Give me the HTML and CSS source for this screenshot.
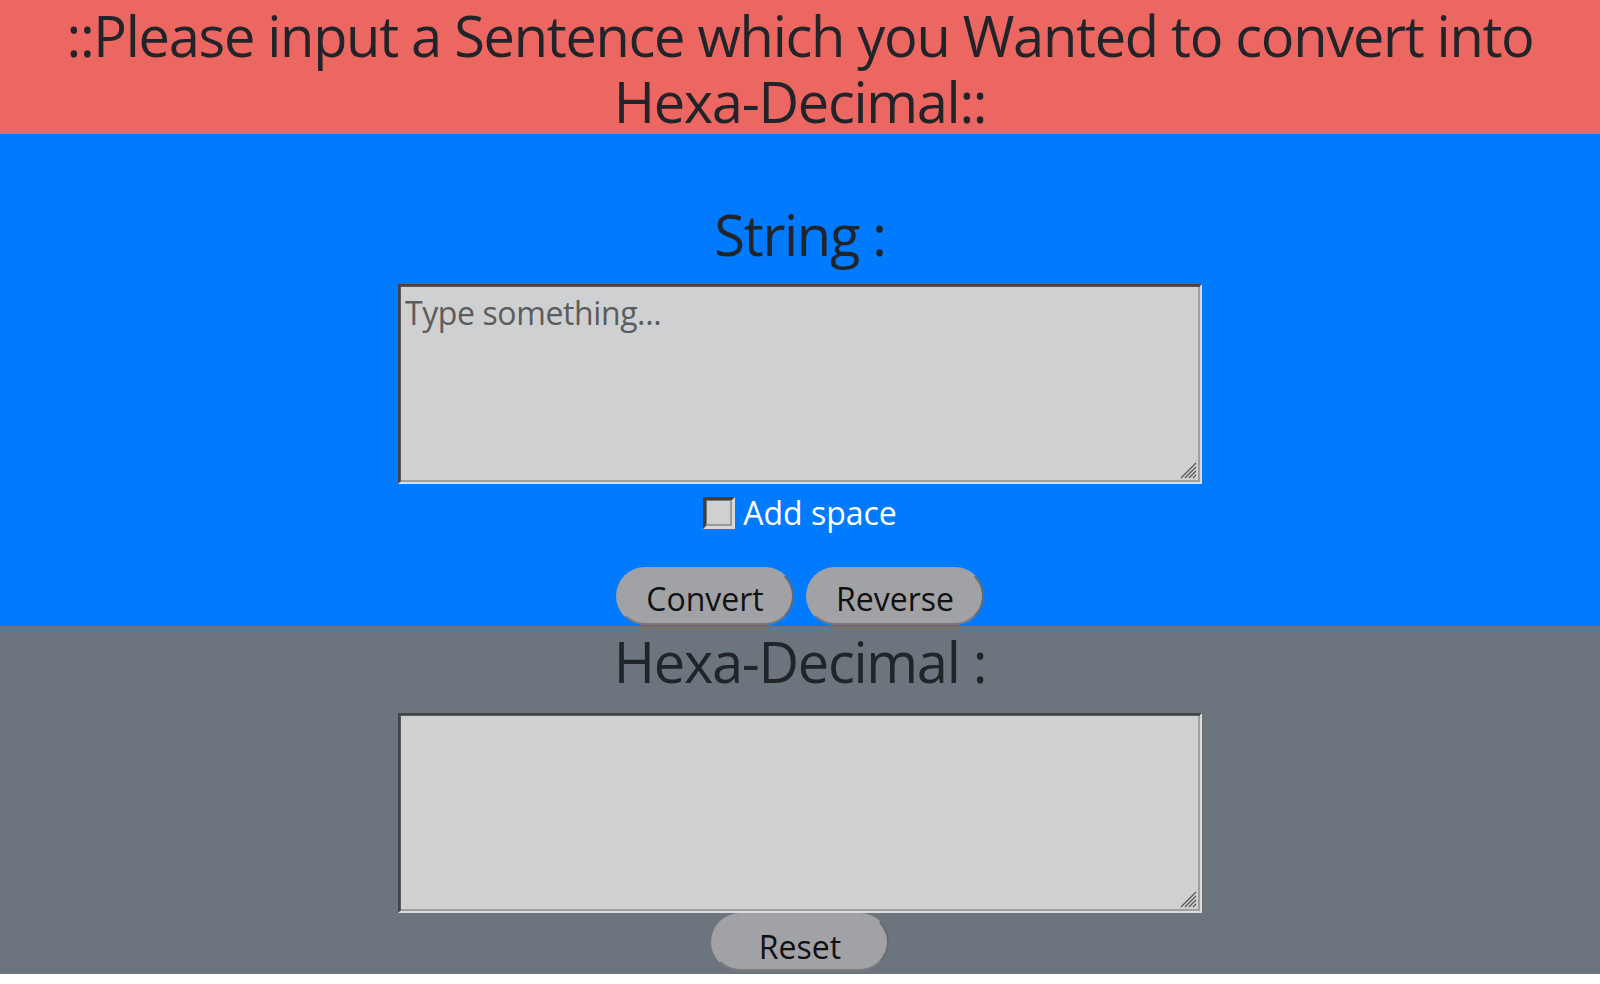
FILE: index.html
```html
<!DOCTYPE html>
<html lang="en">
<head>
<meta charset="utf-8">
<title>String to Hexa-Decimal</title>
<link rel="stylesheet" href="styles.css">
</head>
<body>
<header class="banner">
  <h1 class="banner-title">::Please input a Sentence which you Wanted to convert into Hexa-Decimal::</h1>
</header>
<section class="panel panel-input">
  <h2 class="panel-title">String :</h2>
  <div class="field-wrap">
    <textarea class="field" placeholder="Type something..."></textarea>
    <svg class="grip" width="17" height="17" viewBox="0 0 17 17" aria-hidden="true">
      <path d="M16 1 L1 16 M16 5 L5 16 M16 9 L9 16 M16 13 L13 16" stroke="#555555" stroke-width="1.2" fill="none"/>
    </svg>
  </div>
  <label class="option">
    <input type="checkbox" class="check">
    <span class="option-text">Add space</span>
  </label>
  <div class="actions actions-main">
    <button class="btn">Convert</button>
    <button class="btn">Reverse</button>
  </div>
</section>
<section class="panel panel-output">
  <h2 class="panel-title">Hexa-Decimal :</h2>
  <div class="field-wrap">
    <textarea class="field"></textarea>
    <svg class="grip" width="17" height="17" viewBox="0 0 17 17" aria-hidden="true">
      <path d="M16 1 L1 16 M16 5 L5 16 M16 9 L9 16 M16 13 L13 16" stroke="#555555" stroke-width="1.2" fill="none"/>
    </svg>
  </div>
  <div class="actions">
    <button class="btn btn-reset">Reset</button>
  </div>
</section>
</body>
</html>
```
FILE: styles.css
```css
html, body {
  margin: 0;
  padding: 0;
  background: #ffffff;
}
body {
  font-family: "Open Sans", "Noto Sans", sans-serif;
  color: #212529;
}
.banner {
  background: #ec6762;
  height: 134px;
  padding-top: 2px;
  box-sizing: border-box;
  text-align: center;
}
.banner-title {
  margin: 0;
  font-size: 56px;
  font-weight: 400;
  line-height: 66px;
  letter-spacing: -1.3px;
  color: #212529;
}
.panel {
  display: flex;
  flex-direction: column;
  align-items: center;
  box-sizing: border-box;
}
.panel-input {
  background: #007bff;
  height: 492px;
  padding-top: 67px;
}
.panel-output {
  background: #6c757d;
  height: 348px;
  padding-top: 2px;
}
.panel-title {
  margin: 0;
  font-size: 56px;
  font-weight: 400;
  line-height: 67px;
  letter-spacing: -1.3px;
  color: #212529;
}
.panel-input .panel-title {
  margin-bottom: -3px;
}
.panel-output .panel-title {
  margin-bottom: -1px;
}
.field-wrap {
  position: relative;
  margin-top: 19px;
  width: 804px;
  height: 200px;
}
.field {
  display: block;
  width: 804px;
  height: 200px;
  box-sizing: border-box;
  background: #cfd0d2;
  border-width: 2px;
  border-style: solid;
  border-color: #444444 #dcdcdc #dcdcdc #444444;
  box-shadow: inset 1px 1px 0 #5a5a5a, inset -2px -2px 0 #a0a0a0;
  padding: 5px 4px 3px 5px;
  margin: 0;
  resize: none;
  font-family: "Open Sans", "Noto Sans", sans-serif;
  font-size: 32px;
  letter-spacing: -0.4px;
  color: #212529;
  outline: none;
}
.field::placeholder {
  color: #5c5c5c;
}
.grip {
  position: absolute;
  right: 5px;
  bottom: 5px;
}
.option {
  margin-top: 13px;
  display: flex;
  align-items: center;
  gap: 8px;
  height: 32px;
}
.check {
  appearance: none;
  -webkit-appearance: none;
  margin: 0;
  width: 32px;
  height: 32px;
  box-sizing: border-box;
  background: #cfd0d2;
  border-width: 3px;
  border-style: solid;
  border-color: #3f3f3f #d8d8d8 #d8d8d8 #3f3f3f;
  box-shadow: inset -2px -2px 0 #9a9a9a, inset 1px 1px 0 #777777;
}
.option-text {
  font-size: 32px;
  line-height: 32px;
  color: #ffffff;
}
.actions {
  display: flex;
  gap: 12px;
}
.actions-main {
  margin-top: 38px;
}
.btn {
  width: 178px;
  height: 58px;
  box-sizing: border-box;
  border-radius: 29px;
  background: #a1a2a6;
  border-width: 2px;
  border-style: solid;
  border-color: #a1a2a6 #6a6a6e #7a7a7e #a1a2a6;
  padding: 6px 0 0;
  line-height: 48px;
  font-family: "Open Sans", "Noto Sans", sans-serif;
  font-size: 32px;
  color: #111111;
  text-align: center;
}
.btn-reset {
  padding-top: 9px;
  line-height: 45px;
}
```
